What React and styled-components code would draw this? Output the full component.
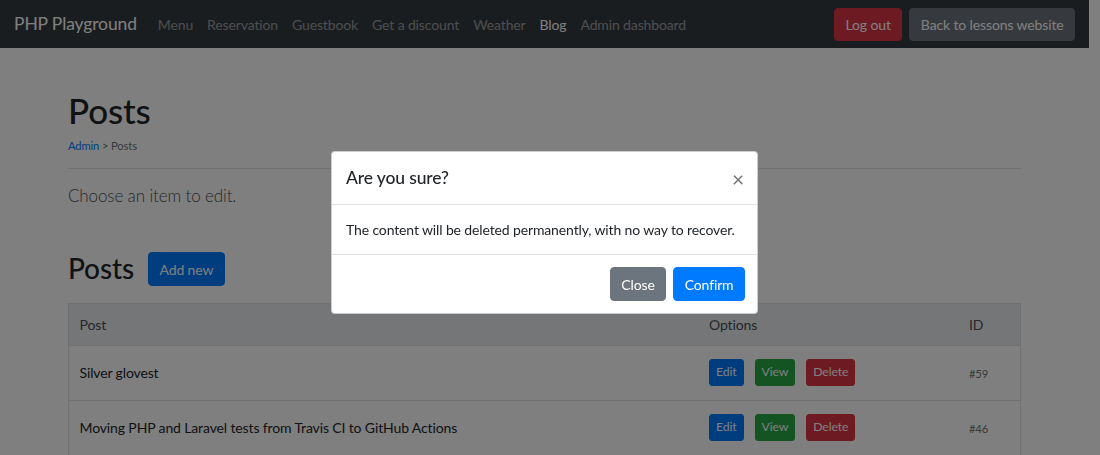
import React from "react";
import styled, { createGlobalStyle } from "styled-components";

const GlobalStyle = createGlobalStyle`
  html, body { margin: 0; padding: 0; }
  body {
    font-family: Lato, "Open Sans", sans-serif;
    font-size: 14px;
    line-height: 1.5;
    letter-spacing: -0.13px;
    color: #212529;
    background: #fff;
    overflow: hidden;
  }
  * { box-sizing: border-box; }
`;

const Page = styled.div`
  padding-right: 11px;
  min-height: 455px;
`;

const Navbar = styled.nav`
  display: flex;
  align-items: center;
  height: 48px;
  padding: 1px 14px 0;
  background: #343a40;
`;

const Brand = styled.a`
  font-size: 17.5px;
  color: #fff;
  margin-right: 14px;
  text-decoration: none;
  white-space: nowrap;
`;

const NavList = styled.div`
  display: flex;
`;

const NavLink = styled.a`
  padding: 0 7px;
  font-size: 14px;
  color: ${(p) => (p.$active ? "#fff" : "rgba(255,255,255,.5)")};
  text-decoration: none;
  white-space: nowrap;
`;

const NavRight = styled.div`
  margin-left: auto;
  display: flex;
  gap: 7px;
`;

const variants = {
  primary: "#007bff",
  secondary: "#6c757d",
  success: "#28a745",
  danger: "#dc3545",
};

const Button = styled.button`
  font-family: inherit;
  letter-spacing: -0.13px;
  font-size: ${(p) => (p.$small ? "12.25px" : "14px")};
  line-height: 1.5;
  padding: ${(p) => (p.$small ? "3px 6px" : "5.25px 10.5px")};
  border: 1px solid ${(p) => variants[p.$variant]};
  background: ${(p) => variants[p.$variant]};
  color: #fff;
  border-radius: ${(p) => (p.$small ? "3px" : "4px")};
  white-space: nowrap;
  cursor: pointer;
`;

const Container = styled.main`
  width: 953px;
  margin: 0 auto;
`;

const Title = styled.h1`
  font-size: 35px;
  font-weight: 500;
  line-height: 1.2;
  margin: 41px 0 6px;
`;

const Breadcrumb = styled.div`
  font-size: 11.2px;
  line-height: 18px;
  color: #6c757d;
`;

const Crumb = styled.a`
  color: #007bff;
  text-decoration: none;
`;

const Divider = styled.hr`
  margin: 13px 0 0;
  border: 0;
  border-top: 1px solid rgba(0, 0, 0, 0.1);
`;

const Lead = styled.p`
  font-size: 17px;
  font-weight: 300;
  line-height: 26px;
  margin: 14px 0 0;
  color: #495057;
`;

const SectionHeader = styled.div`
  display: flex;
  align-items: center;
  gap: 14px;
  margin-top: 44px;
  height: 32px;
`;

const SectionTitle = styled.h2`
  font-size: 28px;
  font-weight: 500;
  line-height: 1.2;
  margin: 0;
`;

const Table = styled.table`
  width: 100%;
  margin-top: 18px;
  border-collapse: collapse;
  border: 1px solid #dee2e6;
`;

const Th = styled.th`
  text-align: left;
  font-weight: 400;
  color: #495057;
  background: #e9ecef;
  height: 42px;
  padding: 0 10.5px;
  width: ${(p) => p.$w || "auto"};
`;

const Td = styled.td`
  height: 55px;
  padding: 0 10.5px 1px;
  border-top: 1px solid #dee2e6;
  vertical-align: middle;
`;

const Actions = styled.div`
  display: flex;
  gap: 11px;
`;

const IdText = styled.span`
  font-size: 11.2px;
  color: #6c757d;
`;

const Backdrop = styled.div`
  position: fixed;
  inset: 0;
  background: rgba(0, 0, 0, 0.5);
`;

const Modal = styled.div`
  position: fixed;
  top: 151px;
  left: 331px;
  width: 427px;
  background: #fff;
  border: 1px solid rgba(0, 0, 0, 0.2);
  border-radius: 4px;
`;

const ModalHeader = styled.div`
  display: flex;
  align-items: center;
  justify-content: space-between;
  height: 53px;
  padding: 0 14px;
  border-bottom: 1px solid #dee2e6;
`;

const ModalTitle = styled.h5`
  margin: 0;
  font-size: 17.5px;
  font-weight: 500;
  line-height: 1.5;
`;

const CloseX = styled.span`
  font-size: 21px;
  line-height: 1;
  color: #000;
  opacity: 0.55;
  margin-right: -1px;
`;

const ModalBody = styled.div`
  height: 49px;
  display: flex;
  align-items: center;
  padding: 0 14px;
  white-space: nowrap;
`;

const ModalFooter = styled.div`
  display: flex;
  justify-content: flex-end;
  align-items: center;
  gap: 7px;
  height: 59px;
  padding: 0 12px;
  border-top: 1px solid #dee2e6;
`;

const links = ["Menu", "Reservation", "Guestbook", "Get a discount", "Weather", "Blog", "Admin dashboard"];

const posts = [
  { title: "Silver glovest", id: "#59" },
  { title: "Moving PHP and Laravel tests from Travis CI to GitHub Actions", id: "#46" },
];

export default function App() {
  return (
    <>
      <GlobalStyle />
      <Page>
        <Navbar>
          <Brand>PHP Playground</Brand>
          <NavList>
            {links.map((l) => (
              <NavLink key={l} $active={l === "Blog"}>{l}</NavLink>
            ))}
          </NavList>
          <NavRight>
            <Button $variant="danger">Log out</Button>
            <Button $variant="secondary">Back to lessons website</Button>
          </NavRight>
        </Navbar>
        <Container>
          <Title>Posts</Title>
          <Breadcrumb>
            <Crumb>Admin</Crumb> &gt; Posts
          </Breadcrumb>
          <Divider />
          <Lead>Choose an item to edit.</Lead>
          <SectionHeader>
            <SectionTitle>Posts</SectionTitle>
            <Button $variant="primary">Add new</Button>
          </SectionHeader>
          <Table>
            <thead>
              <tr>
                <Th>Post</Th>
                <Th $w="260px">Options</Th>
                <Th $w="62px">ID</Th>
              </tr>
            </thead>
            <tbody>
              {posts.map((p) => (
                <tr key={p.id}>
                  <Td>{p.title}</Td>
                  <Td>
                    <Actions>
                      <Button $small $variant="primary">Edit</Button>
                      <Button $small $variant="success">View</Button>
                      <Button $small $variant="danger">Delete</Button>
                    </Actions>
                  </Td>
                  <Td><IdText>{p.id}</IdText></Td>
                </tr>
              ))}
            </tbody>
          </Table>
        </Container>
      </Page>
      <Backdrop />
      <Modal>
        <ModalHeader>
          <ModalTitle>Are you sure?</ModalTitle>
          <CloseX>×</CloseX>
        </ModalHeader>
        <ModalBody>The content will be deleted permanently, with no way to recover.</ModalBody>
        <ModalFooter>
          <Button $variant="secondary">Close</Button>
          <Button $variant="primary">Confirm</Button>
        </ModalFooter>
      </Modal>
    </>
  );
}
